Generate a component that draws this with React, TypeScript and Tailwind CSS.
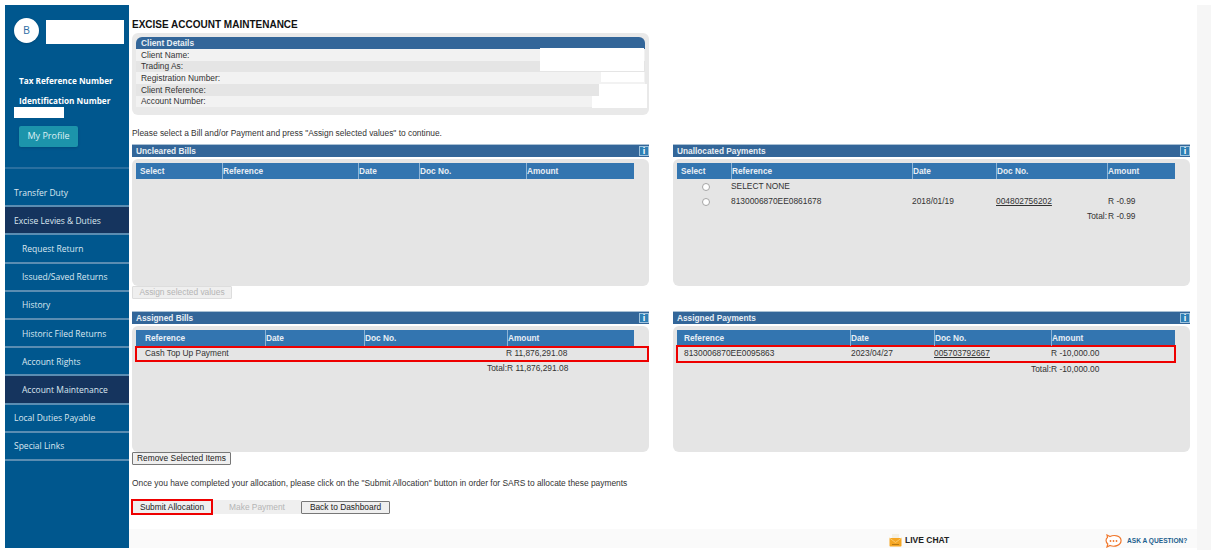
const navItems = [
  { label: "Transfer Duty", sub: false, active: false },
  { label: "Excise Levies & Duties", sub: false, active: true },
  { label: "Request Return", sub: true, active: false },
  { label: "Issued/Saved Returns", sub: true, active: false },
  { label: "History", sub: true, active: false },
  { label: "Historic Filed Returns", sub: true, active: false },
  { label: "Account Rights", sub: true, active: false },
  { label: "Account Maintenance", sub: true, active: true },
  { label: "Local Duties Payable", sub: false, active: false },
  { label: "Special Links", sub: false, active: false },
];

const clientRows = ["Client Name:", "Trading As:", "Registration Number:", "Client Reference:", "Account Number:"];

function InfoIcon() {
  return (
    <span className="flex h-[10px] w-[10px] items-center justify-center border border-[#9fc3dd] bg-[#2f7fb5] text-[9px] leading-none font-bold text-white">
      i
    </span>
  );
}

function SectionBar({ title, info }: { title: string; info?: boolean }) {
  return (
    <div className="flex h-[13px] items-center justify-between border-t border-[#a9c0d4] bg-[#336699] pl-[4px] text-[8.3px] font-bold text-[#e8eef4]">
      <span>{title}</span>
      {info && <InfoIcon />}
    </div>
  );
}

function TableHead({ cols, template, firstPad }: { cols: string[]; template: string; firstPad: string }) {
  return (
    <div className={`ml-[1px] grid h-[16px] w-[498px] items-center bg-[#3375b0] text-[8.3px] font-bold text-[#e8eef4] ${template}`}>
      {cols.map((c, i) => (
        <div key={c} className={i === 0 ? `flex h-full items-center ${firstPad}` : "flex h-full items-center border-l border-[#8fb4d6]"}>
          {c}
        </div>
      ))}
    </div>
  );
}

function Radio() {
  return <span className="block h-[8px] w-[8px] rounded-full border border-[#a5a5a5] bg-white" />;
}

function ChatIcon() {
  return (
    <svg width="17" height="14" viewBox="0 0 17 14" fill="none">
      <path d="M2 1 L5 2.5 C9 0.5 15.5 1.5 16 6 C16.5 11 10 13.5 5 11.5 L2 13 L2.8 10 C0.5 8 0.5 5 2.5 3.5 Z" stroke="#f0782d" strokeWidth="1.2" fill="#fff" />
      <circle cx="5.5" cy="7" r="0.9" fill="#f0782d" />
      <circle cx="8.5" cy="7" r="0.9" fill="#f0782d" />
      <circle cx="11.5" cy="7" r="0.9" fill="#f0782d" />
    </svg>
  );
}

function MailIcon() {
  return (
    <svg width="13" height="14" viewBox="0 0 13 14" fill="none">
      <rect x="3" y="1" width="7" height="6" fill="#f4f0e4" />
      <rect x="0.5" y="5" width="12" height="8.5" rx="0.8" fill="#f5a623" />
      <path d="M0.5 5 L6.5 9.5 L12.5 5" stroke="#fbd27c" strokeWidth="0.8" />
      <rect x="3" y="11" width="7" height="1" fill="#b97a12" />
    </svg>
  );
}

export default function App() {
  return (
    <div className="relative flex h-[550px] w-[1211px] overflow-hidden bg-white pt-[5px] pb-[2px] pl-[5px] font-['Liberation_Sans',Arial,sans-serif] text-[#333]">
      {/* sidebar */}
      <aside className="relative flex w-[124px] shrink-0 flex-col bg-[#00578e] font-['Open_Sans',sans-serif] text-[8.5px] text-[#dce7f0]">
        <div className="h-[164px] border-b-2 border-[#2a6f9f] pl-[9px]">
          <div className="mt-[13px] flex h-[25px] w-[25px] items-center justify-center rounded-full bg-white font-['Liberation_Sans',sans-serif] text-[10px] text-[#2f6ea5] shadow">
            B
          </div>
          <div className="mt-[32px] ml-[5px] text-[8.2px] font-bold text-white">Tax Reference Number</div>
          <div className="mt-[8px] ml-[5px] text-[8.2px] font-bold text-white">Identification Number</div>
          <div className="mt-[18px] ml-[5px] flex h-[21px] w-[59px] items-center justify-center rounded-[2px] bg-[#1c94ab] text-[9px] text-[#dff1f5] shadow">
            My Profile
          </div>
        </div>
        <div className="mt-[10px] flex flex-col">
          {navItems.map((item) => (
            <div
              key={item.label}
              className={`flex h-[28.2px] items-center border-b-2 border-[#5b8db2] pt-[2px] ${item.sub ? "pl-[17px]" : "pl-[9px]"} ${item.active ? "bg-[#15345e]" : ""}`}
            >
              {item.label}
            </div>
          ))}
        </div>
        {/* redacted */}
        <div className="absolute top-[15px] left-[41px] h-[24px] w-[78px] bg-white" />
        <div className="absolute top-[102px] left-[9px] h-[11px] w-[50px] bg-white" />
      </aside>

      {/* main column */}
      <div className="flex w-[1068px] shrink-0 flex-col">
        <main className="flex-1 pt-[14px] pr-[7px] pl-[3px] text-[8.4px]">
          <h1 className="h-[14px] text-[10px] leading-[11px] font-bold text-[#111]">EXCISE ACCOUNT MAINTENANCE</h1>

          <div className="relative h-[82px] w-[517px] rounded-[6px] bg-[#e9e9e9] px-[4px] pt-[4px]">
            <div className="flex h-[12px] items-center rounded-t-[6px] bg-[#336699] pl-[5px] font-bold text-[#e8eef4]">Client Details</div>
            {clientRows.map((r, i) => (
              <div key={r} className={`flex h-[11.7px] items-center pl-[5px] ${i % 2 === 0 ? "bg-[#f2f2f2]" : "bg-[#e5e5e5]"}`}>
                {r}
              </div>
            ))}
            {/* redacted */}
            <div className="absolute top-[15px] left-[408px] h-[23px] w-[104px] bg-white" />
            <div className="absolute top-[39px] left-[469px] h-[10px] w-[43px] bg-white" />
            <div className="absolute top-[51px] left-[467px] h-[12px] w-[48px] bg-white" />
            <div className="absolute top-[63px] left-[460px] h-[12px] w-[55px] bg-white" />
          </div>

          <p className="mt-[13px] h-[11px] leading-[11px]">Please select a Bill and/or Payment and press "Assign selected values" to continue.</p>

          <div className="mt-[5px] grid grid-cols-[517px_517px] gap-x-[24px]">
            <section>
              <SectionBar title="Uncleared Bills" info />
              <div className="mt-[2px] h-[127px] rounded-[6px] bg-[#e5e5e5] pt-[4px] pl-[3px]">
                <TableHead cols={["Select", "Reference", "Date", "Doc No.", "Amount"]} template="grid-cols-[86px_136px_61px_107px_108px]" firstPad="pl-[4px]" />
              </div>
            </section>
            <section>
              <SectionBar title="Unallocated Payments" info />
              <div className="mt-[2px] h-[127px] rounded-[6px] bg-[#e5e5e5] pt-[4px] pl-[3px]">
                <TableHead cols={["Select", "Reference", "Date", "Doc No.", "Amount"]} template="grid-cols-[54px_181px_84px_111px_68px]" firstPad="pl-[4px]" />
                <div className="ml-[1px] grid h-[15px] w-[498px] grid-cols-[54px_181px_84px_111px_68px] items-center">
                  <div className="flex justify-end pr-[21px]"><Radio /></div>
                  <div>SELECT NONE</div>
                </div>
                <div className="ml-[1px] grid h-[15px] w-[498px] grid-cols-[54px_181px_84px_111px_68px] items-center">
                  <div className="mt-[1px] flex justify-end pr-[21px]"><Radio /></div>
                  <div>8130006870EE0861678</div>
                  <div>2018/01/19</div>
                  <div className="underline">004802756202</div>
                  <div className="pl-[1px]">R -0.99</div>
                </div>
                <div className="ml-[1px] grid h-[15px] w-[498px] grid-cols-[430px_68px] items-center">
                  <div className="text-right">Total:</div>
                  <div className="pl-[1px]">R -0.99</div>
                </div>
              </div>
            </section>
          </div>

          <button className="block h-[13px] w-[100px] rounded-[1px] border border-[#ddd] bg-[#efefef] text-[8.4px] leading-none text-[#b5b5b5]">
            Assign selected values
          </button>

          <div className="mt-[12px] grid grid-cols-[517px_517px] gap-x-[24px]">
            <section>
              <SectionBar title="Assigned Bills" info />
              <div className="mt-[2px] h-[126px] rounded-[6px] bg-[#e5e5e5] pt-[4px] pl-[3px]">
                <TableHead cols={["Reference", "Date", "Doc No.", "Amount"]} template="grid-cols-[129px_99px_143px_127px]" firstPad="pl-[9px]" />
                <div className="grid h-[16px] w-[514px] grid-cols-[361px_143px] items-center border-2 border-[#ee0000] pl-[8px]">
                  <div className="-mt-[1px]">Cash Top Up Payment</div>
                  <div className="-mt-[1px]">R 11,876,291.08</div>
                </div>
                <div className="mt-[-1px] ml-[1px] grid h-[15px] w-[498px] grid-cols-[371px_127px] items-center">
                  <div className="text-right">Total:</div>
                  <div>R 11,876,291.08</div>
                </div>
              </div>
            </section>
            <section>
              <SectionBar title="Assigned Payments" info />
              <div className="mt-[2px] h-[126px] rounded-[6px] bg-[#e5e5e5] pt-[4px] pl-[3px]">
                <TableHead cols={["Reference", "Date", "Doc No.", "Amount"]} template="grid-cols-[173px_84px_117px_124px]" firstPad="pl-[7px]" />
                <div className="-mt-[1px] grid h-[18px] w-[500px] grid-cols-[167px_83px_117px_120px] items-center border-2 border-[#ee0000] pl-[6px]">
                  <div className="-mt-[1px]">8130006870EE0095863</div>
                  <div className="-mt-[1px]">2023/04/27</div>
                  <div className="-mt-[1px] underline">005703792667</div>
                  <div className="-mt-[1px]">R -10,000.00</div>
                </div>
                <div className="-mt-[1px] ml-[1px] grid h-[15px] w-[498px] grid-cols-[374px_124px] items-center">
                  <div className="text-right">Total:</div>
                  <div>R -10,000.00</div>
                </div>
              </div>
            </section>
          </div>

          <button className="block h-[13px] w-[99px] rounded-[1px] border border-[#777] bg-[#efefef] text-[8.4px] leading-none text-[#222]">
            Remove Selected Items
          </button>

          <p className="mt-[13px] h-[11px] leading-[11px]">
            Once you have completed your allocation, please click on the "Submit Allocation" button in order for SARS to allocate these payments
          </p>

          <div className="mt-[10px] -ml-[1px] flex items-center">
            <button className="h-[16px] w-[82px] border-2 border-[#ee0000] bg-[#efefef] text-[8.4px] leading-none text-[#222]">Submit Allocation</button>
            <button className="h-[14px] w-[88px] bg-[#efefef] text-[8.4px] leading-none text-[#b5b5b5]">Make Payment</button>
            <button className="h-[13px] w-[89px] rounded-[1px] border border-[#777] bg-[#efefef] text-[8.4px] leading-none text-[#222]">Back to Dashboard</button>
          </div>
        </main>

        <footer className="relative h-[19px] bg-[#fafafa]">
          <div className="absolute top-[4px] left-[760px] flex items-center gap-[3px] text-[8.5px] font-bold text-[#222]">
            <MailIcon />
            LIVE CHAT
          </div>
          <div className="absolute top-[5px] left-[976px] flex items-center gap-[5px] text-[6.6px] font-bold text-[#1c5f8e]">
            <ChatIcon />
            ASK A QUESTION?
          </div>
        </footer>
      </div>

      <div className="-mb-[2px] flex-1 bg-[#f6f6f6]" />
    </div>
  );
}
